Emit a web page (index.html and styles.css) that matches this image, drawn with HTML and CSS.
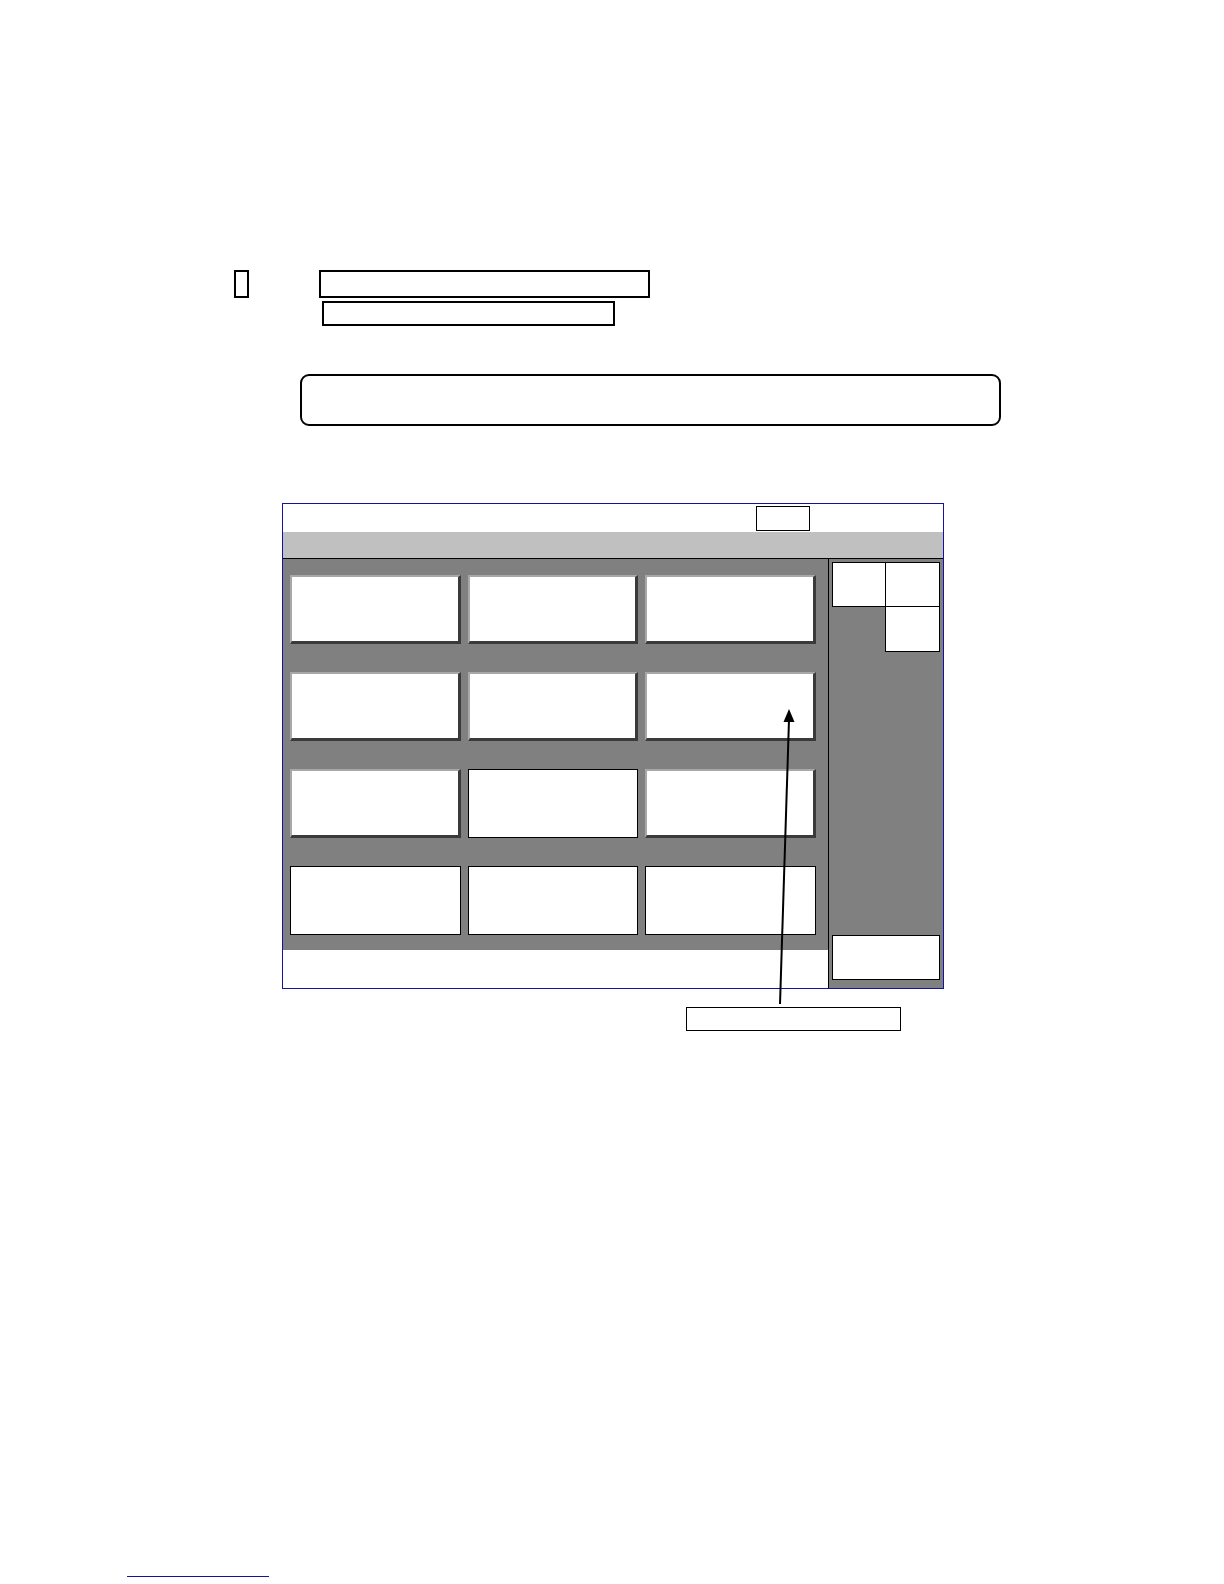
FILE: index.html
```html
<!DOCTYPE html>
<html lang="en">
<head>
<meta charset="utf-8">
<title>Screen layout</title>
<link rel="stylesheet" href="styles.css">
</head>
<body>
<div class="page">
  <div class="top">
    <div class="mark"></div>
    <div class="fields">
      <div class="field field-a"></div>
      <div class="field field-b"></div>
    </div>
  </div>

  <div class="notice"></div>

  <div class="screen">
    <div class="titlebar"><div class="tbox"></div></div>
    <div class="band"></div>
    <div class="body">
      <div class="main">
        <div class="grid">
          <div class="cell"></div><div class="cell"></div><div class="cell"></div>
          <div class="cell"></div><div class="cell"></div><div class="cell"></div>
          <div class="cell"></div><div class="cell flat"></div><div class="cell"></div>
          <div class="cell flat"></div><div class="cell flat"></div><div class="cell flat"></div>
        </div>
        <div class="strip"></div>
      </div>
      <div class="side">
        <div class="keys">
          <div class="key k1"></div>
          <div class="key k2"></div>
          <div class="key-empty"></div>
          <div class="key k4"></div>
        </div>
        <div class="key wide"></div>
      </div>
    </div>
  </div>

  <div class="label"></div>

  <div class="rule"></div>

  <svg class="arrow" width="1224" height="1584" viewBox="0 0 1224 1584" aria-hidden="true">
    <line x1="780" y1="1004" x2="789" y2="720" stroke="#000" stroke-width="2"/>
    <polygon points="789,709 783.5,722 794.5,722" fill="#000"/>
  </svg>
</div>
</body>
</html>
```

FILE: styles.css
```css
html, body {
  margin: 0;
  padding: 0;
  background: #ffffff;
  font-family: "Liberation Sans", Arial, sans-serif;
}

.page {
  position: relative;
  width: 1224px;
  min-height: 1584px;
  box-sizing: border-box;
}

.top {
  display: flex;
  padding: 270px 0 0 234px;
}

.mark {
  width: 15px;
  height: 28px;
  border: 2px solid #000;
  box-sizing: border-box;
}

.fields {
  display: flex;
  flex-direction: column;
  gap: 3px;
  margin-left: 70px;
}

.field {
  border: 2px solid #000;
  box-sizing: border-box;
}

.field-a {
  width: 331px;
  height: 28px;
}

.field-b {
  width: 293px;
  height: 25px;
  margin-left: 3px;
}

.notice {
  margin: 48px 0 0 300px;
  width: 701px;
  height: 52px;
  border: 2px solid #000;
  border-radius: 9px;
  box-sizing: border-box;
}

.screen {
  margin: 77px 0 0 282px;
  width: 662px;
  height: 486px;
  border: 1px solid #1414a0;
  box-sizing: border-box;
  display: flex;
  flex-direction: column;
}

.titlebar {
  height: 28px;
  background: #fff;
  padding-left: 473px;
  box-sizing: border-box;
}

.tbox {
  margin-top: 2px;
  width: 54px;
  height: 25px;
  border: 1px solid #000;
  box-sizing: border-box;
}

.band {
  height: 26px;
  background: #c0c0c0;
}

.body {
  flex: 1;
  display: flex;
}

.main {
  width: 545px;
  display: flex;
  flex-direction: column;
}

.grid {
  height: 392px;
  box-sizing: border-box;
  background: #808080;
  border-top: 1px solid #000;
  padding: 16px 12px 0 7px;
  display: grid;
  grid-template-columns: 171px 170px 171px;
  grid-template-rows: repeat(4, 69px);
  column-gap: 7px;
  row-gap: 28px;
}

.cell {
  background: #fff;
  box-sizing: border-box;
  border-style: solid;
  border-width: 2px 3px 3px 2px;
  border-color: #a8a8a8 #3a3a3a #3a3a3a #a8a8a8;
}

.cell.flat {
  border: 1px solid #000;
}

.strip {
  flex: 1;
  background: #fff;
}

.side {
  width: 115px;
  box-sizing: border-box;
  background: #808080;
  border-left: 1px solid #000;
  border-top: 1px solid #000;
  padding: 3px 3px 8px 3px;
  display: flex;
  flex-direction: column;
  justify-content: space-between;
}

.keys {
  display: grid;
  grid-template-columns: 54px 54px;
  grid-template-rows: 45px 45px;
}

.key {
  background: #fff;
  border: 1px solid #000;
  box-sizing: border-box;
}

.k2 {
  margin-left: -1px;
}

.k4 {
  margin-left: -1px;
  margin-top: -1px;
}

.key.wide {
  width: 108px;
  height: 45px;
}

.label {
  margin: 18px 0 0 686px;
  width: 215px;
  height: 24px;
  border: 1px solid #000;
  box-sizing: border-box;
}

.rule {
  margin: 545px 0 0 127px;
  width: 142px;
  border-top: 1px solid #1414a0;
}

.arrow {
  position: absolute;
  left: 0;
  top: 0;
  pointer-events: none;
}
```
